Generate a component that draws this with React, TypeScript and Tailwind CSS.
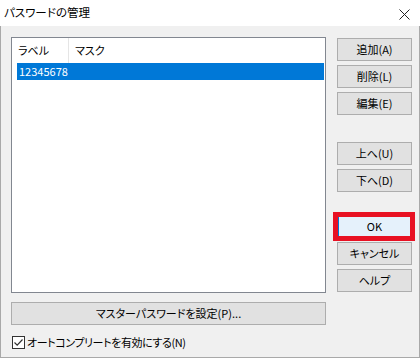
import React from 'react';

const font = 'font-["Noto_Sans_CJK_JP","Liberation_Sans",sans-serif] [font-feature-settings:"palt"]';

function Btn({ label, className = '' }: { label: string; className?: string }) {
  return (
    <div
      className={`h-[23px] w-[75px] flex items-center justify-center bg-[#e1e1e1] border border-[#adadad] text-[11px] leading-none text-black ${className}`}
    >
      {label}
    </div>
  );
}

export default function App() {
  return (
    <div className={`w-[420px] h-[358px] flex flex-col bg-white text-black ${font}`}>
      {/* Title bar */}
      <div className="h-[26px] flex items-center justify-between pl-[4px] pr-[10px] bg-white">
        <span className="text-[11.5px] leading-none">パスワードの管理</span>
        <svg width="11" height="11" viewBox="0 0 11 11" className="mt-[2px]">
          <path d="M0.5 0.5 L10.5 10.5 M10.5 0.5 L0.5 10.5" stroke="#222" strokeWidth="1" fill="none" />
        </svg>
      </div>

      {/* Dialog body */}
      <div className="flex-1 flex flex-col bg-[#f0f0f0] border-x border-b border-[#a9a9a9] pt-[11px] pl-[10px] pr-[7px]">
        <div className="flex gap-[11px] h-[256px]">
          {/* List view */}
          <div className="w-[315px] h-full border border-[#828790] bg-white flex flex-col">
            <div className="h-[25px] flex text-[11px] leading-none">
              <div className="w-[57px] border-r border-[#e5e5e5] flex items-center pl-[6px]">ラベル</div>
              <div className="flex items-center pl-[6px]">マスク</div>
            </div>
            <div className="h-[17px] ml-[5px] mr-px bg-[#0078d7] text-white flex items-center pl-[2px] text-[11px] leading-none">
              12345678
            </div>
          </div>

          {/* Side buttons */}
          <div className="w-[75px] pt-px flex flex-col">
            <Btn label="追加(A)" />
            <Btn label="削除(L)" className="mt-[4px]" />
            <Btn label="編集(E)" className="mt-[4px]" />
            <Btn label="上へ(U)" className="mt-[27px]" />
            <Btn label="下へ(D)" className="mt-[4px]" />
            <div className="relative mt-[23px]">
              <div className="h-[23px] w-[75px] flex items-center justify-center bg-[#e5f1fb] border-2 border-[#0078d7] text-[11px] leading-none">
                OK
              </div>
              <div className="absolute -left-[4px] -top-[3px] w-[82px] h-[29px] border-[5px] border-[#e81123]" />
            </div>
            <Btn label="キャンセル" className="mt-[4px]" />
            <Btn label="ヘルプ" className="mt-[4px]" />
          </div>
        </div>

        {/* Master password button */}
        <div className="mt-[9px] w-[315px] h-[23px] flex items-center justify-center bg-[#e1e1e1] border border-[#adadad] text-[11px] leading-none">
          マスターパスワードを設定(P)...
        </div>

        {/* Autocomplete checkbox */}
        <div className="mt-[9px] h-[17px] flex items-center pl-px gap-[2px] text-[11px] leading-none">
          <div className="w-[13px] h-[13px] border border-[#333] bg-white flex items-center justify-center">
            <svg width="11" height="11" viewBox="0 0 11 11">
              <path d="M1.5 5.5 L4.2 8.2 L9.5 2.5" stroke="#333" strokeWidth="1.2" fill="none" />
            </svg>
          </div>
          <span className="tracking-[-0.4px]">オートコンプリートを有効にする(N)</span>
        </div>
      </div>
    </div>
  );
}
